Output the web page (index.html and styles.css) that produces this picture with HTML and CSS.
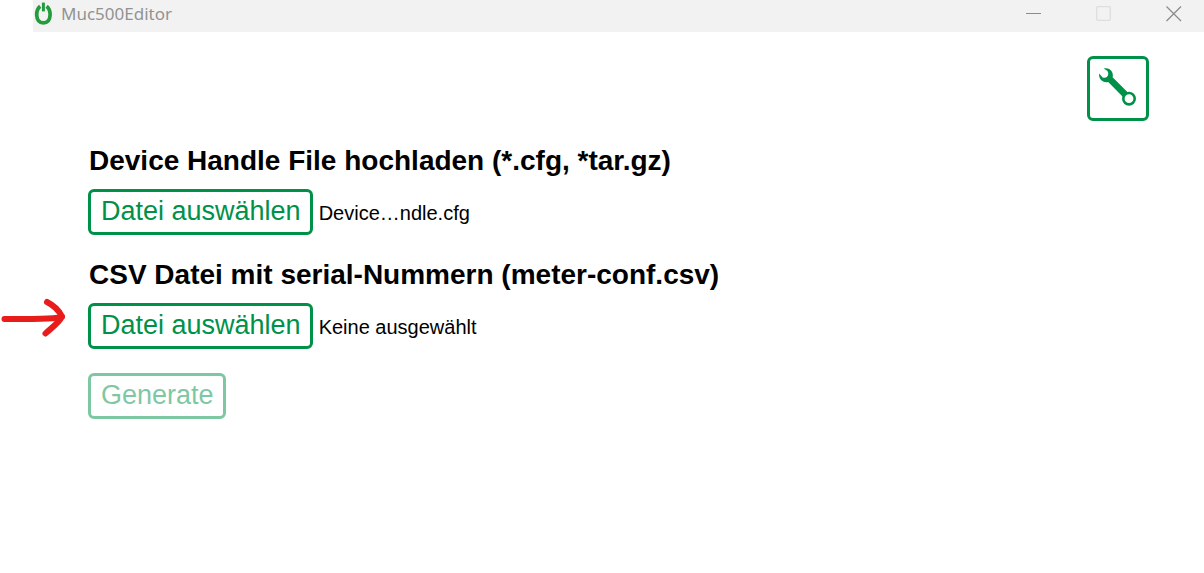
FILE: index.html
```html
<!DOCTYPE html>
<html lang="de">
<head>
<meta charset="utf-8">
<meta name="viewport" content="width=device-width, initial-scale=1">
<title>Muc500Editor</title>
<link rel="stylesheet" href="styles.css">
</head>
<body>
<header class="titlebar">
  <svg class="logo" viewBox="0 0 20 24" aria-hidden="true">
    <path d="M7.200 4.200C4.300 6.500 3.600 9.500 3.700 13C3.900 17.700 6.200 20.800 10.400 20.800C14.600 20.800 16.900 17.700 17.100 13C17.200 9.500 16.500 6.500 13.600 4.200" fill="none" stroke="#249b3c" stroke-width="3.700"/>
    <path d="M10.400 .6v8.800" fill="none" stroke="#249b3c" stroke-width="3"/>
  </svg>
  <span class="app-name">Muc500Editor</span>
  <div class="window-controls">
    <button class="window-button" type="button" aria-label="Minimieren">
      <svg viewBox="0 0 16 16" aria-hidden="true"><path d="M0 7.500h15" stroke="#8c8c8c" fill="none"/></svg>
    </button>
    <button class="window-button" type="button" aria-label="Maximieren" disabled>
      <svg viewBox="0 0 16 16" aria-hidden="true"><rect x=".7" y=".7" width="13.600" height="13.600" rx="1" stroke="#dedede" stroke-width="1.300" fill="none"/></svg>
    </button>
    <button class="window-button" type="button" aria-label="Schließen">
      <svg viewBox="0 0 16 16" aria-hidden="true"><path d="M.5.500l14.500 14.500M15 .500L.5 15" stroke="#8c8c8c" stroke-width="1.300" fill="none"/></svg>
    </button>
  </div>
</header>
<main class="content">
  <div class="toolbar">
    <button class="button tool-button" type="button" aria-label="Einstellungen">
      <svg viewBox="0 0 40 40" aria-hidden="true">
        <path d="M5.800 1.400C11 .2 15 3.700 14.900 8.700L14.600 10.300L29.600 25.300L25 29.900L10.200 14.900C5.500 16.500 .4 12.500 1.100 6.500L4.600 10.500Q7.200 11.300 8.900 10Q10.700 8.300 10.200 5.700Q9.500 3.300 5.800 1.400Z" fill="#009149"/>
        <circle cx="31" cy="31.700" r="5.700" fill="#fff" stroke="#009149" stroke-width="2.600"/>
      </svg>
    </button>
  </div>
  <form class="form">
    <section class="field">
      <h1 class="heading" id="device-heading">Device Handle File hochladen (*.cfg, *tar.gz)</h1>
      <div class="file-row">
        <button class="button" type="button" aria-describedby="device-heading device-file">Datei auswählen</button>
        <span class="file-name" id="device-file">Device…ndle.cfg</span>
      </div>
    </section>
    <section class="field">
      <h1 class="heading" id="csv-heading">CSV Datei mit serial-Nummern (meter-conf.csv)</h1>
      <div class="file-row">
        <button class="button" type="button" aria-describedby="csv-heading csv-file">Datei auswählen</button>
        <span class="file-name" id="csv-file">Keine ausgewählt</span>
        <svg class="arrow" viewBox="0 0 68 44" aria-hidden="true">
          <path d="M4.500 24C22 24.200 43 24.200 53 23.300Q58 23 62 21.500" fill="none" stroke="#e91c1c" stroke-width="6" stroke-linecap="round"/>
          <path d="M47 7C54 10.500 59 15.500 62 21.500C58 29 51 33 45.500 38.500" fill="none" stroke="#e91c1c" stroke-width="6" stroke-linecap="round" stroke-linejoin="round"/>
        </svg>
      </div>
    </section>
    <button class="button generate" type="submit" disabled>Generate</button>
  </form>
</main>
</body>
</html>
```
FILE: styles.css
```css
* {
  box-sizing: border-box;
}

body {
  margin: 0;
  background: #fff;
  color: #000;
  font-family: "Liberation Sans", Arial, sans-serif;
}

.titlebar {
  display: flex;
  align-items: center;
  height: 32px;
  margin-left: 33px;
  padding-bottom: 4px;
  background: #f2f2f2;
}

.logo {
  width: 20px;
  height: 24px;
}

.app-name {
  margin-left: 8px;
  color: #929292;
  font: 17px/24px "Noto Sans", sans-serif;
}

.window-controls {
  display: flex;
  gap: 22px;
  margin-left: auto;
  padding-right: 6px;
}

.window-button {
  display: grid;
  place-items: center;
  width: 48px;
  height: 28px;
  padding: 0;
  border: 0;
  background: none;
}

.window-button svg {
  width: 16px;
  height: 16px;
}

.content {
  padding: 24px 55px 24px 88px;
}

.toolbar {
  display: flex;
  justify-content: flex-end;
}

.button {
  padding: 3px 9px 5px 10px;
  border: 3px solid #009149;
  border-radius: 6px;
  background: #fff;
  color: #009149;
  font: 27px/32px "Liberation Sans", Arial, sans-serif;
}

.tool-button {
  display: grid;
  width: 62px;
  height: 65px;
  padding: 8px;
}

.tool-button svg {
  width: 40px;
  height: 40px;
}

.form {
  padding-top: 24px;
}

.field {
  margin-bottom: 24px;
}

.heading {
  margin: 0 0 12px;
  padding-left: 1px;
  font-size: 28px;
  line-height: 32px;
}

.file-row {
  position: relative;
  display: flex;
  align-items: center;
  gap: 6px;
}

.file-name {
  padding-top: 2px;
  font-size: 20px;
  line-height: 24px;
}

.arrow {
  position: absolute;
  right: 100%;
  top: -8px;
  width: 68px;
  height: 44px;
  margin-right: 20px;
}

.generate:disabled {
  opacity: 0.5;
}
```
